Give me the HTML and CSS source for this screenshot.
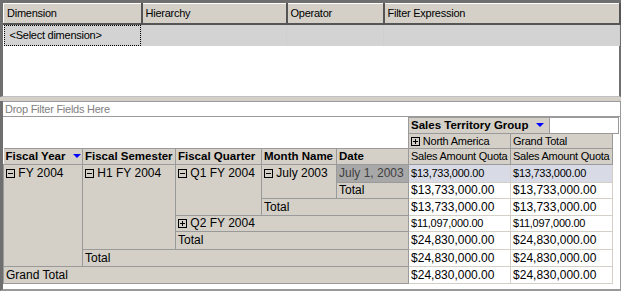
FILE: index.html
```html
<!DOCTYPE html>
<html>
<head>
    <title>Pivot Table Browser</title>
    <link rel="stylesheet" href="styles.css">
</head>
<body>

<div class="frame">

    <div class="filter-pane">
        <table class="filter-grid">
            <tr>
                <th class="col-dim">Dimension</th>
                <th class="col-hier">Hierarchy</th>
                <th class="col-op">Operator</th>
                <th class="col-expr">Filter Expression</th>
            </tr>
            <tr class="select-row">
                <td><span class="focus">&lt;Select dimension&gt;</span></td>
                <td></td>
                <td></td>
                <td></td>
            </tr>
        </table>
    </div>

    <div class="splitter"></div>

    <div class="pivot-pane">
        <div class="drop-zone">Drop Filter Fields Here</div>

        <table class="pivot">
            <colgroup>
                <col class="w-year">
                <col class="w-sem">
                <col class="w-qtr">
                <col class="w-month">
                <col class="w-date">
                <col class="w-val">
                <col class="w-val">
                <col class="w-pad">
            </colgroup>
            <tr class="r-a">
                <td class="blank" colspan="5" rowspan="2"></td>
                <td class="col-area" colspan="3">
                    <div class="col-area-inner">
                        <div class="field-btn">Sales Territory Group <span class="arrow"></span></div>
                        <div class="col-rest"></div>
                    </div>
                </td>
            </tr>
            <tr class="r-b">
                <td class="hdr"><svg class="tog" width="9" height="9" viewBox="0 0 9 9"><rect x="0.5" y="0.5" width="8" height="8" fill="none" stroke="#000"/><path d="M2 4.5h5M4.5 2v5" stroke="#000"/></svg> North America</td>
                <td class="hdr">Grand Total</td>
                <td class="blank"></td>
            </tr>
            <tr class="r-c">
                <td class="fld">Fiscal Year <span class="arrow"></span></td>
                <td class="fld">Fiscal Semester</td>
                <td class="fld">Fiscal Quarter</td>
                <td class="fld">Month Name</td>
                <td class="fld">Date</td>
                <td class="hdr">Sales Amount Quota</td>
                <td class="hdr">Sales Amount Quota</td>
                <td class="blank"></td>
            </tr>
            <tr class="r-1">
                <td class="mem span" rowspan="6"><svg class="tog" width="9" height="9" viewBox="0 0 9 9"><rect x="0.5" y="0.5" width="8" height="8" fill="none" stroke="#000"/><path d="M2 4.5h5" stroke="#000"/></svg> FY 2004</td>
                <td class="mem span" rowspan="5"><svg class="tog" width="9" height="9" viewBox="0 0 9 9"><rect x="0.5" y="0.5" width="8" height="8" fill="none" stroke="#000"/><path d="M2 4.5h5" stroke="#000"/></svg> H1 FY 2004</td>
                <td class="mem span" rowspan="3"><svg class="tog" width="9" height="9" viewBox="0 0 9 9"><rect x="0.5" y="0.5" width="8" height="8" fill="none" stroke="#000"/><path d="M2 4.5h5" stroke="#000"/></svg> Q1 FY 2004</td>
                <td class="mem span" rowspan="2"><svg class="tog" width="9" height="9" viewBox="0 0 9 9"><rect x="0.5" y="0.5" width="8" height="8" fill="none" stroke="#000"/><path d="M2 4.5h5" stroke="#000"/></svg> July 2003</td>
                <td class="mem sel">July 1, 2003</td>
                <td class="val small hi">$13,733,000.00</td>
                <td class="val small hi">$13,733,000.00</td>
                <td class="blank"></td>
            </tr>
            <tr class="r-2">
                <td class="mem">Total</td>
                <td class="val">$13,733,000.00</td>
                <td class="val">$13,733,000.00</td>
                <td class="blank"></td>
            </tr>
            <tr class="r-3">
                <td class="mem" colspan="2">Total</td>
                <td class="val">$13,733,000.00</td>
                <td class="val">$13,733,000.00</td>
                <td class="blank"></td>
            </tr>
            <tr class="r-4">
                <td class="mem" colspan="3"><svg class="tog" width="9" height="9" viewBox="0 0 9 9"><rect x="0.5" y="0.5" width="8" height="8" fill="none" stroke="#000"/><path d="M2 4.5h5M4.5 2v5" stroke="#000"/></svg> Q2 FY 2004</td>
                <td class="val small">$11,097,000.00</td>
                <td class="val small">$11,097,000.00</td>
                <td class="blank"></td>
            </tr>
            <tr class="r-5">
                <td class="mem" colspan="3">Total</td>
                <td class="val">$24,830,000.00</td>
                <td class="val">$24,830,000.00</td>
                <td class="blank"></td>
            </tr>
            <tr class="r-6">
                <td class="mem" colspan="4">Total</td>
                <td class="val">$24,830,000.00</td>
                <td class="val">$24,830,000.00</td>
                <td class="blank"></td>
            </tr>
            <tr class="r-7">
                <td class="mem" colspan="5">Grand Total</td>
                <td class="val">$24,830,000.00</td>
                <td class="val">$24,830,000.00</td>
                <td class="blank"></td>
            </tr>
        </table>
    </div>

</div>

</body>
</html>
```

FILE: styles.css
```css
body {
  margin: 0;
  padding: 0;
  background-color: #ffffff;
  font-family: "Liberation Sans", Arial, sans-serif;
  font-size: 11px;
  letter-spacing: -0.25px;
  color: #000;
}

.frame {
  width: 621px;
  height: 291px;
  display: flex;
  flex-direction: column;
  background-color: #d4d0c8;
}

/* filter grid */
.filter-pane {
  flex-shrink: 0;
  height: 93px;
  background-color: #fff;
  border-top: 3px solid #6f6f6f;
  border-left: 3px solid #6f6f6f;
  border-right: 2px solid #6f6f6f;
  border-bottom: 1px solid #c0c0c0;
}

.filter-grid {
  border-collapse: collapse;
  table-layout: fixed;
  width: 616px;
}

.filter-grid th {
  height: 20px;
  padding: 0 0 0 3px;
  text-align: left;
  font-weight: normal;
  background-color: #d4d0c8;
  border-top: 1px solid #fff;
  border-left: 1px solid #fff;
  border-right: 2px solid #555;
  border-bottom: 2px solid #555;
  box-sizing: border-box;
}

.col-dim { width: 138px; }
.col-hier { width: 145px; }
.col-op { width: 97px; }
.col-expr { width: 236px; }

.select-row td {
  height: 21px;
  padding: 0;
  background-color: #d3d3d3;
  border-right: 1px solid #cfcfcf;
}

.focus {
  display: block;
  height: 19px;
  line-height: 19px;
  padding-left: 5px;
  border: 1px dotted #000;
}

.splitter {
  flex-shrink: 0;
  height: 4px;
}

/* pivot area */
.pivot-pane {
  flex: 1;
  background-color: #fff;
  border-left: 3px solid #6f6f6f;
  border-right: 1px solid #9a9a9a;
  border-bottom: 2px solid #9a9a9a;
}

.drop-zone {
  height: 14px;
  line-height: 14px;
  padding-left: 2px;
  color: #808080;
  border-top: 1px solid #9a9a9a;
  border-bottom: 1px solid #9a9a9a;
}

.pivot {
  border-collapse: collapse;
  table-layout: fixed;
  width: 615px;
}

.w-year { width: 79px; }
.w-sem { width: 93px; }
.w-qtr { width: 86px; }
.w-month { width: 75px; }
.w-date { width: 72px; }
.w-val { width: 102px; }
.w-pad { width: 6px; }

.pivot td {
  padding: 0 0 0 2px;
  white-space: nowrap;
  overflow: hidden;
  vertical-align: middle;
  line-height: 13px;
}

.pivot td.blank {
  border: none;
  padding: 0;
}

.r-a { height: 16px; }
.r-b { height: 15px; }
.r-c { height: 16px; }
.r-1 { height: 18px; }
.r-2 { height: 16px; }
.r-3 { height: 17px; }
.r-4 { height: 16px; }
.r-5 { height: 18px; }
.r-6 { height: 17px; }
.r-7 { height: 17px; }

.col-area {
  border: 1px solid #9a9a9a;
  padding: 0 !important;
}

.col-area-inner {
  display: flex;
  height: 15px;
  line-height: 15px;
}

.field-btn {
  width: 138px;
  padding-left: 2px;
  font-weight: bold;
  font-size: 11.5px;
  letter-spacing: 0;
  background-color: #d4d0c8;
  border-right: 1px solid #9a9a9a;
}

.col-rest {
  flex: 1;
}

.arrow {
  display: inline-block;
  width: 0;
  height: 0;
  margin-left: 4px;
  vertical-align: 2px;
  border-left: 4px solid transparent;
  border-right: 4px solid transparent;
  border-top: 4px solid #0000ff;
}

.pivot td.hdr {
  background-color: #d4d0c8;
  border: 1px solid #9a9a9a;
}

.pivot td.fld {
  font-size: 11.5px;
  font-weight: bold;
  letter-spacing: 0;
  background-color: #d4d0c8;
  border-top: 1px solid #9a9a9a;
  border-right: 1px solid #9a9a9a;
  border-bottom: 1px solid #9a9a9a;
}

.pivot td.mem {
  font-size: 12px;
  letter-spacing: 0;
  background-color: #d4d0c8;
  border: 1px solid #9a9a9a;
}

.pivot td.span {
  vertical-align: top;
  padding-top: 2px;
}

.pivot td.sel {
  background-color: #a8a8a8;
  color: #404040;
}

.pivot td.val {
  font-size: 12px;
  letter-spacing: 0;
  background-color: #fff;
  border: 1px solid #d4d0c8;
}

.pivot td.small {
  font-size: 11px;
  letter-spacing: -0.25px;
}

.pivot td.hi {
  background-color: #d8dbe6;
}

.tog {
  vertical-align: -1px;
}
```
